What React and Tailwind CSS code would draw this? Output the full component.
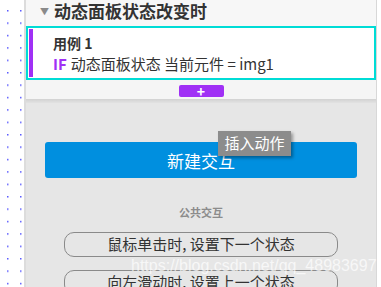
import React from 'react'

export default function App() {
    const font = { fontFamily: '"Noto Sans CJK SC", "Noto Sans", sans-serif' }
    return (
        <div className="relative w-[381px] h-[287px] overflow-hidden flex bg-white" style={font}>
            {/* dotted canvas strip */}
            <div className="w-[24px] h-full bg-white shrink-0">
                <svg width="24" height="287">
                    <defs>
                        <pattern id="dots" x="7" y="10" width="13" height="12.4" patternUnits="userSpaceOnUse">
                            <rect x="0" y="0" width="1.5" height="1.5" fill="#5a5aff" />
                        </pattern>
                    </defs>
                    <rect width="24" height="287" fill="url(#dots)" />
                </svg>
            </div>
            <div className="w-[2px] h-full bg-[#dcdcdc] shrink-0" />

            {/* panel */}
            <div className="w-[350px] h-full flex flex-col bg-[#e6e6e6] shrink-0">
                <div className="h-[26px] shrink-0 bg-[#f7f7f7] flex items-center pl-[14px] gap-[5px]">
                    <span className="text-[9px] text-[#8a8a8a] leading-none mt-[-4px]">▼</span>
                    <span className="text-[17px] font-bold text-[#333] leading-none mt-[-6px]">动态面板状态改变时</span>
                </div>

                <div className="h-[54px] shrink-0 border-2 border-[#00dcd6] bg-white flex">
                    <div className="w-[4px] ml-[1px] my-[1px] bg-[#a030f5]" />
                    <div className="pl-[20px] pt-[5px] flex flex-col">
                        <span className="text-[14px] font-bold text-[#333] leading-[20px]">用例 1</span>
                        <div className="text-[15px] text-[#333] leading-[20px] mt-[1px]">
                            <span className="font-bold text-[#a030f5] mr-[4px]">IF</span>
                            动态面板状态 当前元件 = img1
                        </div>
                    </div>
                </div>

                <div className="h-[19px] shrink-0 bg-[#f5f5f5] flex justify-center pt-[5px]">
                    <div className="w-[45px] h-[12px] rounded-[2px] bg-[#a030f5] flex items-center justify-center text-white text-[14px] font-bold leading-none">+</div>
                </div>
                <div className="h-[4px] shrink-0 bg-gradient-to-b from-[#d2d2d2] to-[#e2e2e2]" />

                <div className="flex-1 flex flex-col px-[19px] pt-[39px]">
                    <button className="h-[36px] shrink-0 w-full rounded-[3px] bg-[#008fdf] text-white text-[17px] leading-none">新建交互</button>
                    <div className="mt-[29px] text-center text-[11px] font-bold text-[#8c8c8c] leading-none">公共交互</div>
                    <div className="px-[19px] flex flex-col gap-[13px] mt-[14px]">
                        <div className="h-[25px] shrink-0 rounded-[10px] border border-[#8a8a8a] flex items-center justify-center text-[15px] text-[#333]">鼠标单击时, 设置下一个状态</div>
                        <div className="h-[25px] shrink-0 rounded-[10px] border border-[#8a8a8a] flex items-center justify-center text-[15px] text-[#333]">向左滑动时, 设置上一个状态</div>
                    </div>
                </div>
            </div>
            <div className="w-[1px] h-full bg-[#d8d8d8] shrink-0" />
            <div className="flex-1 h-full bg-white" />

            {/* tooltip */}
            <div className="absolute left-[218px] top-[131px] w-[73px] h-[25px] bg-[#8c8c8c] text-white text-[15px] flex items-center justify-center shadow-[2px_2px_3px_rgba(0,0,0,0.35)]">插入动作</div>

            {/* watermark */}
            <div className="absolute left-[131px] top-[258px] text-[16px] text-white/70 leading-none" style={{ fontFamily: '"Liberation Sans", sans-serif' }}>https://blog.csdn.net/qq_48983697</div>
        </div>
    )
}
